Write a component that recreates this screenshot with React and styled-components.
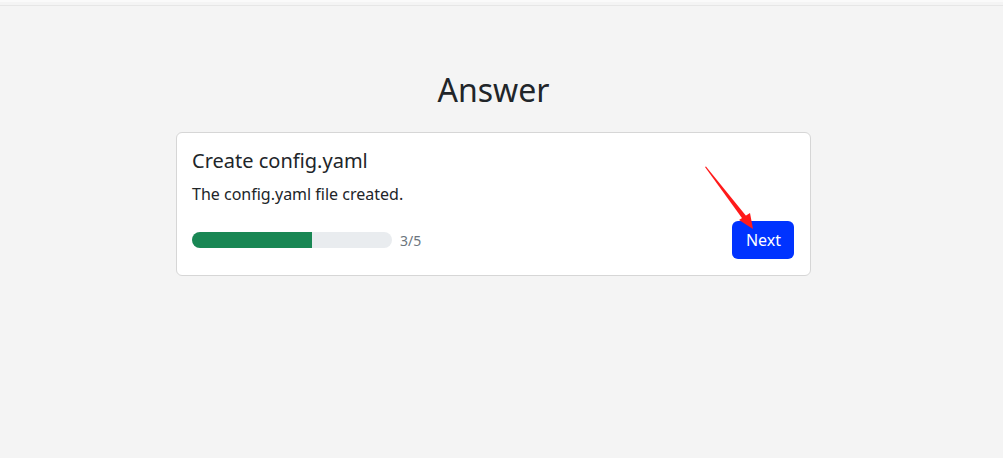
import React from "react";
import styled, { createGlobalStyle } from "styled-components";

const GlobalStyle = createGlobalStyle`
	html, body {
		margin: 0;
		padding: 0;
		background: #f4f4f4;
		font-family: "Noto Sans", "Open Sans", sans-serif;
		color: #212529;
	}
`;

const Page = styled.div`
	width: 1003px;
	height: 458px;
	box-sizing: border-box;
	border-top: 2px solid #fafafa;
	position: relative;
	overflow: hidden;
`;

const TopRule = styled.div`
	height: 1px;
	background: #e6e6e6;
	margin-top: 3px;
`;

const Main = styled.main`
	width: 635px;
	margin: 0 0 0 176px;
	display: flex;
	flex-direction: column;
	align-items: center;
`;

const Heading = styled.h1`
	margin: 64px 0 22px;
	font-size: 32px;
	font-weight: 400;
	line-height: 40px;
	color: #212529;
`;

const Card = styled.div`
	width: 100%;
	box-sizing: border-box;
	background: #fff;
	border: 1px solid #d6d6d6;
	border-radius: 6px;
	padding: 15px 16px 16px 15px;
`;

const Title = styled.h5`
	margin: 0 0 8px;
	font-size: 20px;
	font-weight: 400;
	line-height: 26px;
`;

const Text = styled.p`
	margin: 0 0 15px;
	font-size: 16px;
	line-height: 24px;
`;

const Row = styled.div`
	display: flex;
	align-items: center;
	justify-content: space-between;
`;

const ProgressWrap = styled.div`
	display: flex;
	align-items: center;
	gap: 8px;
`;

const Track = styled.div`
	width: 200px;
	height: 16px;
	border-radius: 8px;
	background: #e9ecef;
	overflow: hidden;
`;

const Fill = styled.div`
	height: 100%;
	background: #198754;
`;

const Count = styled.span`
	font-size: 14px;
	color: #6c757d;
`;

const NextButton = styled.button`
	height: 38px;
	padding: 0 13px 0 14px;
	border: none;
	border-radius: 6px;
	background: #0033ff;
	color: #fff;
	font-family: inherit;
	font-size: 16px;
	cursor: pointer;
`;

const Arrow = styled.svg`
	position: absolute;
	left: 700px;
	top: 160px;
	pointer-events: none;
`;

export default function App() {
	const step = 3;
	const total = 5;
	return (
		<>
			<GlobalStyle />
			<Page>
				<TopRule />
				<Main>
					<Heading>Answer</Heading>
					<Card>
						<Title>Create config.yaml</Title>
						<Text>The config.yaml file created.</Text>
						<Row>
							<ProgressWrap>
								<Track>
									<Fill style={{ width: `${(step / total) * 100}%` }} />
								</Track>
								<Count>
									{step}/{total}
								</Count>
							</ProgressWrap>
							<NextButton>Next</NextButton>
						</Row>
					</Card>
				</Main>
				{/* annotation arrow */}
				<Arrow width="60" height="70" viewBox="0 0 60 70">
					<polygon points="5,5 6,4.5 47,55 43,57.5" fill="#ff1a1a" />
					<polygon points="53,67 39,58 50,51" fill="#ff1a1a" />
				</Arrow>
			</Page>
		</>
	);
}
